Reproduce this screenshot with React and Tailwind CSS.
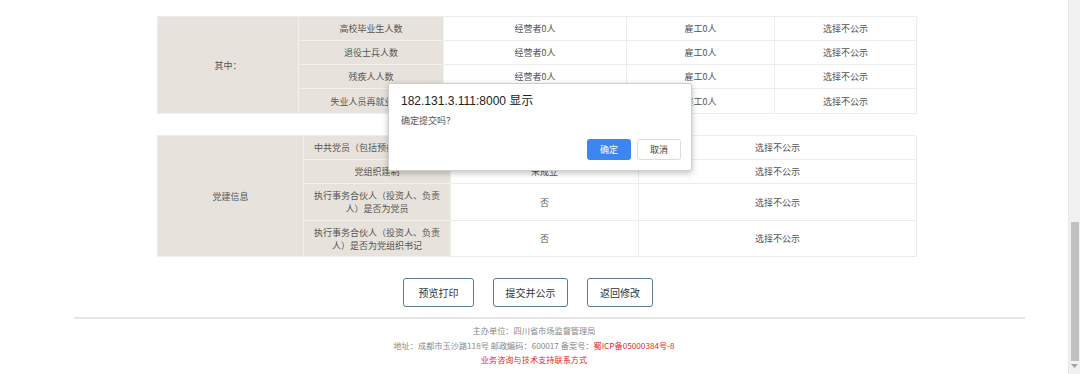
import React from "react";

const cjk = { fontFamily: '"Noto Sans CJK SC", "Liberation Sans", sans-serif' };

const Cell = ({ children, beige, className = "" }) => (
  <div
    className={`flex items-center justify-center text-center border-r border-b leading-[13px] ${
      beige
        ? "bg-[#e7e3dc] border-[#f3f1ec] text-[#555]"
        : "bg-white border-[#ececec] text-[#555]"
    } ${className}`}
  >
    {children}
  </div>
);

const subRows = ["高校毕业生人数", "退役士兵人数", "残疾人人数", "失业人员再就业人数"];

const partyRows = [
  { label: "中共党员（包括预备党员）人数", value: "0人" },
  { label: "党组织建制", value: "未成立" },
  { label: "执行事务合伙人（投资人、负责人）是否为党员", value: "否" },
  { label: "执行事务合伙人（投资人、负责人）是否为党组织书记", value: "否" },
];

const App = () => {
  return (
    <div
      className="relative flex w-[1080px] h-[374px] overflow-hidden bg-white text-[9px]"
      style={cjk}
    >
      <div className="flex-1 flex flex-col pt-[16px]">
        {/* 其中 table */}
        <div className="ml-[157px] w-[759px] grid grid-cols-[141px_145px_183px_148px_142px] grid-rows-[24px_24px_24px_25px] border-t border-l border-[#ececec]">
          <Cell beige className="row-span-4">
            其中：
          </Cell>
          {subRows.map((label) => (
            <React.Fragment key={label}>
              <Cell beige>{label}</Cell>
              <Cell>经营者0人</Cell>
              <Cell>雇工0人</Cell>
              <Cell>选择不公示</Cell>
            </React.Fragment>
          ))}
        </div>

        {/* 党建信息 table */}
        <div className="mt-[21px] ml-[157px] w-[759px] grid grid-cols-[146px_147px_188px_278px] grid-rows-[24px_24px_37px_36px] border-t border-l border-[#ececec]">
          <Cell beige className="row-span-4">
            党建信息
          </Cell>
          {partyRows.map((row) => (
            <React.Fragment key={row.label}>
              <Cell beige className="px-[6px]">
                {row.label}
              </Cell>
              <Cell>{row.value}</Cell>
              <Cell>选择不公示</Cell>
            </React.Fragment>
          ))}
        </div>

        {/* Buttons */}
        <div className="mt-[21px] ml-[403px] flex gap-[19px] text-[10px] text-[#333]">
          <button className="w-[71px] h-[29px] border border-[#5b7896] rounded-[3px] bg-white">
            预览打印
          </button>
          <button className="w-[75px] h-[29px] border border-[#5b7896] rounded-[3px] bg-white">
            提交并公示
          </button>
          <button className="w-[66px] h-[29px] border border-[#5b7896] rounded-[3px] bg-white">
            返回修改
          </button>
        </div>

        {/* Footer */}
        <div className="mt-[10px] ml-[74px] w-[951px] border-t-2 border-[#e6e6e6]" />
        <div className="mt-[4px] flex flex-col items-center text-[8.2px] leading-[14.5px] text-[#888]">
          <div>主办单位：四川省市场监督管理局</div>
          <div>
            地址：成都市玉沙路118号 邮政编码：600017 备案号：
            <span className="text-[#e42b2b]">蜀ICP备05000384号-8</span>
          </div>
          <div className="text-[#e42b2b]">业务咨询与技术支持联系方式</div>
        </div>
      </div>

      {/* Scrollbar */}
      <div className="w-[12px] h-full bg-[#f1f1f1] border-l border-[#e8e8e8] flex flex-col items-center">
        <div className="mt-[222px] w-[8px] h-[139px] bg-[#c1c1c1]" />
        <svg width="7" height="5" viewBox="0 0 7 5" className="mt-[3px]">
          <path d="M0 0h7L3.5 4z" fill="#a3a3a3" />
        </svg>
      </div>

      {/* Alert dialog */}
      <div className="absolute left-[388px] top-[83px] w-[304px] h-[88px] bg-white border border-[#cfcfcf] rounded-[2px] shadow-[0_2px_6px_rgba(0,0,0,0.25)] flex flex-col">
        <div
          className="pl-[12px] pt-[9px] text-[12px] leading-[16px] text-[#222]"
          style={{ fontFamily: '"Liberation Sans", "Noto Sans CJK SC", sans-serif' }}
        >
          182.131.3.111:8000 显示
        </div>
        <div className="pl-[12px] pt-[6px] text-[9px] leading-[12px] text-[#555]">
          确定提交吗？
        </div>
        <div className="mt-auto mb-[10px] mr-[10px] flex justify-end gap-[6px] text-[9px]">
          <button className="w-[44px] h-[21px] rounded-[3px] bg-[#3b86f0] text-white">
            确定
          </button>
          <button className="w-[44px] h-[21px] rounded-[3px] bg-white border border-[#dcdcdc] text-[#444]">
            取消
          </button>
        </div>
      </div>
    </div>
  );
};

export default App;
